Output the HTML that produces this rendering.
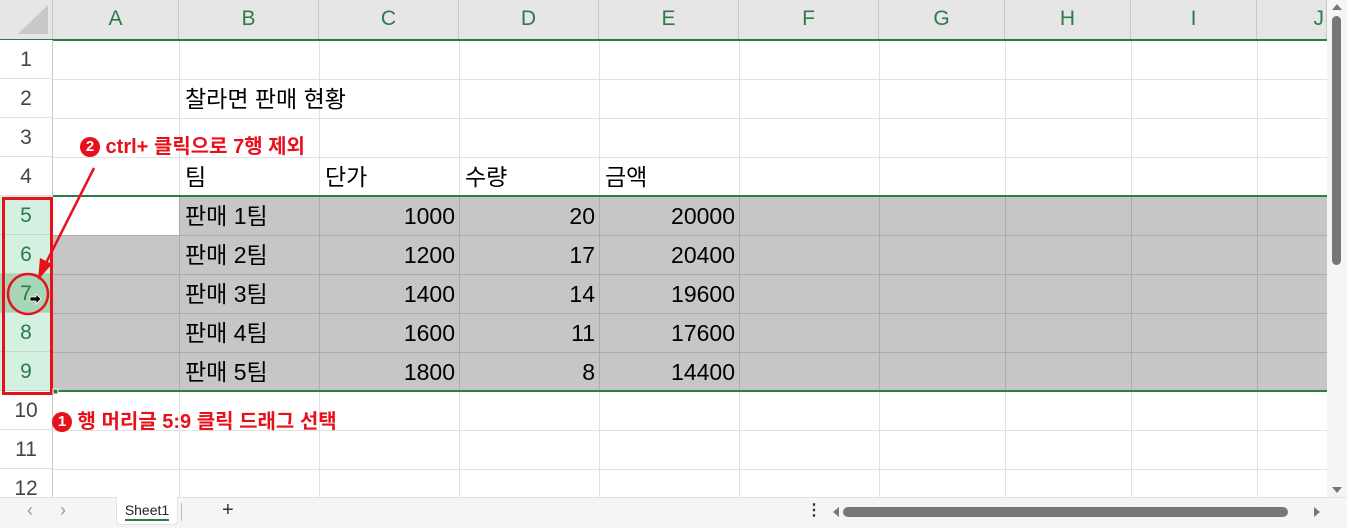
<!DOCTYPE html>
<html><head><meta charset="utf-8"><style>
body{margin:0;width:1347px;height:528px;overflow:hidden;background:#fff;position:relative;font-family:"Liberation Sans","Noto Sans CJK KR",sans-serif}
div{position:absolute;box-sizing:border-box}
.ch{top:0;height:39px;background:#e6e6e6;border-right:1px solid #c8c8c8;color:#2e7a4a;font-size:21px;text-align:center;line-height:38px}
.rh{left:0;width:53px;height:39px;color:#444;font-size:21px;text-align:center;line-height:40px;border-bottom:1px solid #e1e1e1;border-right:1px solid #c8c8c8;background:#fff}
.rh.s{background:#d3f0e0;color:#2e7a4a;border-bottom-color:#c0d8c8}
.t{font-size:23px;color:#000;line-height:39px;height:39px;white-space:nowrap}
.n{text-align:right}
.red{color:#e8101a;font-size:20px;font-weight:bold;white-space:nowrap}
</style></head><body>
<!-- grid lines -->
<svg style="position:absolute;left:0;top:0" width="1347" height="528">
<g stroke="#e1e1e1" stroke-width="1">
<line x1="53" y1="79.5" x2="1327" y2="79.5"/><line x1="53" y1="118.5" x2="1327" y2="118.5"/><line x1="53" y1="157.5" x2="1327" y2="157.5"/>
<line x1="53" y1="430.5" x2="1327" y2="430.5"/><line x1="53" y1="469.5" x2="1327" y2="469.5"/>
<line x1="179.5" y1="40" x2="179.5" y2="497"/><line x1="319.5" y1="40" x2="319.5" y2="497"/><line x1="459.5" y1="40" x2="459.5" y2="497"/><line x1="599.5" y1="40" x2="599.5" y2="497"/><line x1="739.5" y1="40" x2="739.5" y2="497"/><line x1="879.5" y1="40" x2="879.5" y2="497"/><line x1="1005.5" y1="40" x2="1005.5" y2="497"/><line x1="1131.5" y1="40" x2="1131.5" y2="497"/><line x1="1257.5" y1="40" x2="1257.5" y2="497"/>
</g>
<rect x="53" y="196" width="1274" height="195" fill="#c6c6c6"/>
<rect x="53" y="196" width="126" height="39" fill="#fff"/>
<g stroke="#ababab" stroke-width="1">
<line x1="53" y1="235.5" x2="1327" y2="235.5"/><line x1="53" y1="274.5" x2="1327" y2="274.5"/><line x1="53" y1="313.5" x2="1327" y2="313.5"/><line x1="53" y1="352.5" x2="1327" y2="352.5"/>
<line x1="179.5" y1="196" x2="179.5" y2="391"/><line x1="319.5" y1="196" x2="319.5" y2="391"/><line x1="459.5" y1="196" x2="459.5" y2="391"/><line x1="599.5" y1="196" x2="599.5" y2="391"/><line x1="739.5" y1="196" x2="739.5" y2="391"/><line x1="879.5" y1="196" x2="879.5" y2="391"/><line x1="1005.5" y1="196" x2="1005.5" y2="391"/><line x1="1131.5" y1="196" x2="1131.5" y2="391"/><line x1="1257.5" y1="196" x2="1257.5" y2="391"/>
</g>
</svg>
<!-- column headers -->
<div class="ch" style="left:0;width:53px"><svg width="52" height="39" style="position:absolute;left:0;top:0"><polygon points="18,34 48,34 48,5" fill="#c8c8c8"/></svg></div>
<div class="ch" style="left:53px;width:126px">A</div>
<div class="ch" style="left:179px;width:140px">B</div>
<div class="ch" style="left:319px;width:140px">C</div>
<div class="ch" style="left:459px;width:140px">D</div>
<div class="ch" style="left:599px;width:140px">E</div>
<div class="ch" style="left:739px;width:140px">F</div>
<div class="ch" style="left:879px;width:126px">G</div>
<div class="ch" style="left:1005px;width:126px">H</div>
<div class="ch" style="left:1131px;width:126px">I</div>
<div class="ch" style="left:1257px;width:70px;text-align:right;padding-right:2px">J</div>
<div style="left:0;top:39px;width:1327px;height:2px;background:#2e7a4a"></div>
<!-- row headers -->
<div class="rh" style="top:40px">1</div>
<div class="rh" style="top:79px">2</div>
<div class="rh" style="top:118px">3</div>
<div class="rh" style="top:157px">4</div>
<div class="rh s" style="top:196px">5</div>
<div class="rh s" style="top:235px">6</div>
<div class="rh s" style="top:274px;background:#a6d6b5">7</div>
<div class="rh s" style="top:313px">8</div>
<div class="rh s" style="top:352px">9</div>
<div class="rh" style="top:391px">10</div>
<div class="rh" style="top:430px">11</div>
<div class="rh" style="top:469px">12</div>
<div style="left:53px;top:195px;width:1274px;height:2px;background:#2e7a4a"></div>
<div style="left:53px;top:390px;width:1274px;height:2px;background:#2e7a4a"></div>
<!-- text -->
<div class="t" style="left:185px;top:80px">찰라면 판매 현황</div>
<div class="t" style="left:185px;top:158px">팀</div>
<div class="t" style="left:325px;top:158px">단가</div>
<div class="t" style="left:465px;top:158px">수량</div>
<div class="t" style="left:605px;top:158px">금액</div>
<div class="t" style="left:185px;top:197px">판매 1팀</div>
<div class="t" style="left:185px;top:236px">판매 2팀</div>
<div class="t" style="left:185px;top:275px">판매 3팀</div>
<div class="t" style="left:185px;top:314px">판매 4팀</div>
<div class="t" style="left:185px;top:353px">판매 5팀</div>
<div class="t n" style="left:320px;width:135px;top:197px">1000</div>
<div class="t n" style="left:320px;width:135px;top:236px">1200</div>
<div class="t n" style="left:320px;width:135px;top:275px">1400</div>
<div class="t n" style="left:320px;width:135px;top:314px">1600</div>
<div class="t n" style="left:320px;width:135px;top:353px">1800</div>
<div class="t n" style="left:460px;width:135px;top:197px">20</div>
<div class="t n" style="left:460px;width:135px;top:236px">17</div>
<div class="t n" style="left:460px;width:135px;top:275px">14</div>
<div class="t n" style="left:460px;width:135px;top:314px">11</div>
<div class="t n" style="left:460px;width:135px;top:353px">8</div>
<div class="t n" style="left:600px;width:135px;top:197px">20000</div>
<div class="t n" style="left:600px;width:135px;top:236px">20400</div>
<div class="t n" style="left:600px;width:135px;top:275px">19600</div>
<div class="t n" style="left:600px;width:135px;top:314px">17600</div>
<div class="t n" style="left:600px;width:135px;top:353px">14400</div>
<!-- annotations -->
<div class="red" style="left:80px;top:130px"><span style="display:inline-block;width:20px;height:20px;border-radius:50%;background:#e8101a;color:#fff;font-size:15px;text-align:center;line-height:20px;vertical-align:2px">2</span> ctrl+ 클릭으로 7행 제외</div>
<div class="red" style="left:52px;top:405px"><span style="display:inline-block;width:20px;height:20px;border-radius:50%;background:#e8101a;color:#fff;font-size:15px;text-align:center;line-height:20px;vertical-align:2px">1</span> 행 머리글 5:9 클릭 드래그 선택</div>
<svg style="position:absolute;left:0;top:0" width="400" height="528">
<rect x="3.5" y="198.5" width="48" height="195" fill="none" stroke="#e8101a" stroke-width="3"/>
<circle cx="28" cy="294" r="20" fill="none" stroke="#e8101a" stroke-width="2.5"/>
<line x1="94" y1="168" x2="45" y2="265" stroke="#e8101a" stroke-width="2.5"/>
<polygon points="38,280 40,258 52,264" fill="#e8101a"/>
<polygon points="30,297 36,297 36,294 41,299 36,304 36,301 30,301" fill="#000" stroke="#fff" stroke-width="0.8"/>
<rect x="53" y="389" width="5" height="5" fill="#2e7a4a" stroke="#fff"/>
</svg>
<!-- vertical scrollbar -->
<div style="left:1327px;top:0;width:20px;height:497px;background:#f5f5f5"></div>
<svg style="position:absolute;left:1327px;top:0" width="20" height="497">
<polygon points="10,4 15,10 5,10" fill="#777"/>
<rect x="5" y="16" width="9" height="249" rx="4.5" fill="#777"/>
<polygon points="10,493 15,487 5,487" fill="#777"/>
</svg>
<!-- bottom bar -->
<div style="left:0;top:497px;width:1347px;height:31px;background:#f5f5f5;border-top:1px solid #e1e1e1"></div>
<div style="left:27px;top:500px;color:#999;font-size:18px">&#8249;</div>
<div style="left:60px;top:500px;color:#999;font-size:18px">&#8250;</div>
<div style="left:116px;top:497px;width:62px;height:28px;background:#fff;border:1px solid #e1e1e1;border-top:none;border-radius:0 0 4px 4px;font-size:14px;color:#222;text-align:center;line-height:26px">Sheet1<div style="left:8px;top:22px;width:44px;height:2px;background:#2e7a4a"></div></div>
<div style="left:181px;top:503px;width:1px;height:18px;background:#bbb"></div>
<div style="left:222px;top:499px;font-size:20px;color:#333">+</div>
<div style="left:806px;top:500px;font-size:16px;color:#333;font-weight:bold">⋮</div>
<svg style="position:absolute;left:830px;top:500px" width="517" height="24">
<polygon points="3,12 9,7 9,17" fill="#777"/>
<rect x="13" y="7" width="445" height="10" rx="5" fill="#777"/>
<polygon points="490,12 484,7 484,17" fill="#777"/>
</svg>
</body></html>
